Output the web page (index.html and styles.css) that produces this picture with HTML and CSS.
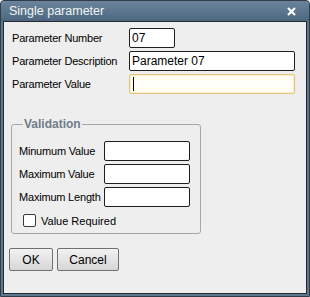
FILE: index.html
```html
<!DOCTYPE html>
<html>
<head>
<meta charset="utf-8">
<link rel="stylesheet" href="styles.css">
</head>
<body>
<div class="window">
  <div class="titlebar">
    <span class="title">Single parameter</span>
    <svg class="close" width="9" height="9" viewBox="0 0 9 9"><path d="M1 1 L8 8 M8 1 L1 8" stroke="#fff" stroke-width="2.2"/></svg>
  </div>
  <div class="content">
    <div class="form">
      <label class="lbl">Parameter Number</label>
      <div class="input short">07</div>
      <label class="lbl">Parameter Description</label>
      <div class="input long">Parameter 07</div>
      <label class="lbl">Parameter Value</label>
      <div class="input long focus"><span class="caret"></span></div>
    </div>
    <fieldset class="group">
      <legend>Validation</legend>
      <div class="vform">
        <label class="lbl">Minumum Value</label>
        <div class="input mid"></div>
        <label class="lbl">Maximum Value</label>
        <div class="input mid"></div>
        <label class="lbl">Maximum Length</label>
        <div class="input mid"></div>
      </div>
      <div class="check"><span class="box"></span><span>Value Required</span></div>
    </fieldset>
    <div class="buttons">
      <button class="btn ok">OK</button>
      <button class="btn cancel">Cancel</button>
    </div>
  </div>
</div>
</body>
</html>
```
FILE: styles.css
```css
html, body { margin: 0; padding: 0; background: #fff; }
body { font-family: "Liberation Sans", Arial, sans-serif; font-size: 11px; color: #000; }
.window {
  width: 310px; height: 297px; box-sizing: border-box;
  border: 1px solid #2f3d4a; border-radius: 4px 4px 0 0;
  background: #5d778d;
  padding: 0 2px 2px 2px;
  display: flex; flex-direction: column;
}
.titlebar {
  height: 20px; display: flex; align-items: center; justify-content: space-between;
  background: linear-gradient(#6b849a, #4c677f);
  margin: 0 -2px; padding-left: 8px; padding-right: 13px;
  border-radius: 3px 3px 0 0;
}
.title { color: #f2f4f6; font-size: 12.5px; }
.close { display: block; }
.content {
  flex: 1; background: #eeeeee; border: 1px solid #252a30;
  padding: 6px 10px 0 7px;
}
.form {
  display: grid; grid-template-columns: 117px 166px; row-gap: 3px; align-items: center;
  padding-left: 1px;
}
.lbl { white-space: nowrap; letter-spacing: -0.2px; }
.input {
  height: 20px; box-sizing: border-box; background: #fff;
  border: 1px solid #1e1e1e; border-radius: 2px;
  padding: 0 2px; display: flex; align-items: center; font-size: 12px;
}
.short { width: 46px; }
.long { width: 166px; }
.mid { width: 86px; }
.focus { border-color: #e6c377; background: #fffef8; box-shadow: inset 0 0 0 1px #fbeecb; }
.caret { width: 1px; height: 14px; background: #000; margin-left: 1px; }
.group {
  margin: 23px 0 0 0; width: 190px; box-sizing: border-box; min-width: 0;
  border: 1px solid #a6a6a6; border-radius: 3px;
  padding: 8px 0 6px 7px;
}
.group legend {
  font-weight: bold; color: #6f7c89; font-size: 12px; padding: 0 1px; margin-left: 4px;
}
.vform {
  display: grid; grid-template-columns: 85px 86px; row-gap: 3px; align-items: center;
  margin-top: 2px;
}
.check { display: flex; align-items: center; gap: 5px; margin-top: 7px; margin-left: 4px; }
.box {
  width: 13px; height: 13px; box-sizing: border-box; background: #fff;
  border: 1px solid #3a3a3a; border-radius: 2px;
}
.buttons { display: flex; gap: 4px; margin-top: 14px; margin-left: -2px; }
.btn {
  height: 23px; box-sizing: border-box; font: 12px "Liberation Sans", Arial, sans-serif;
  background: linear-gradient(#f2f2f2, #d6d6d6);
  border: 1px solid #707070; border-radius: 2px; padding: 0;
}
.ok { width: 44px; }
.cancel { width: 62px; }
```
